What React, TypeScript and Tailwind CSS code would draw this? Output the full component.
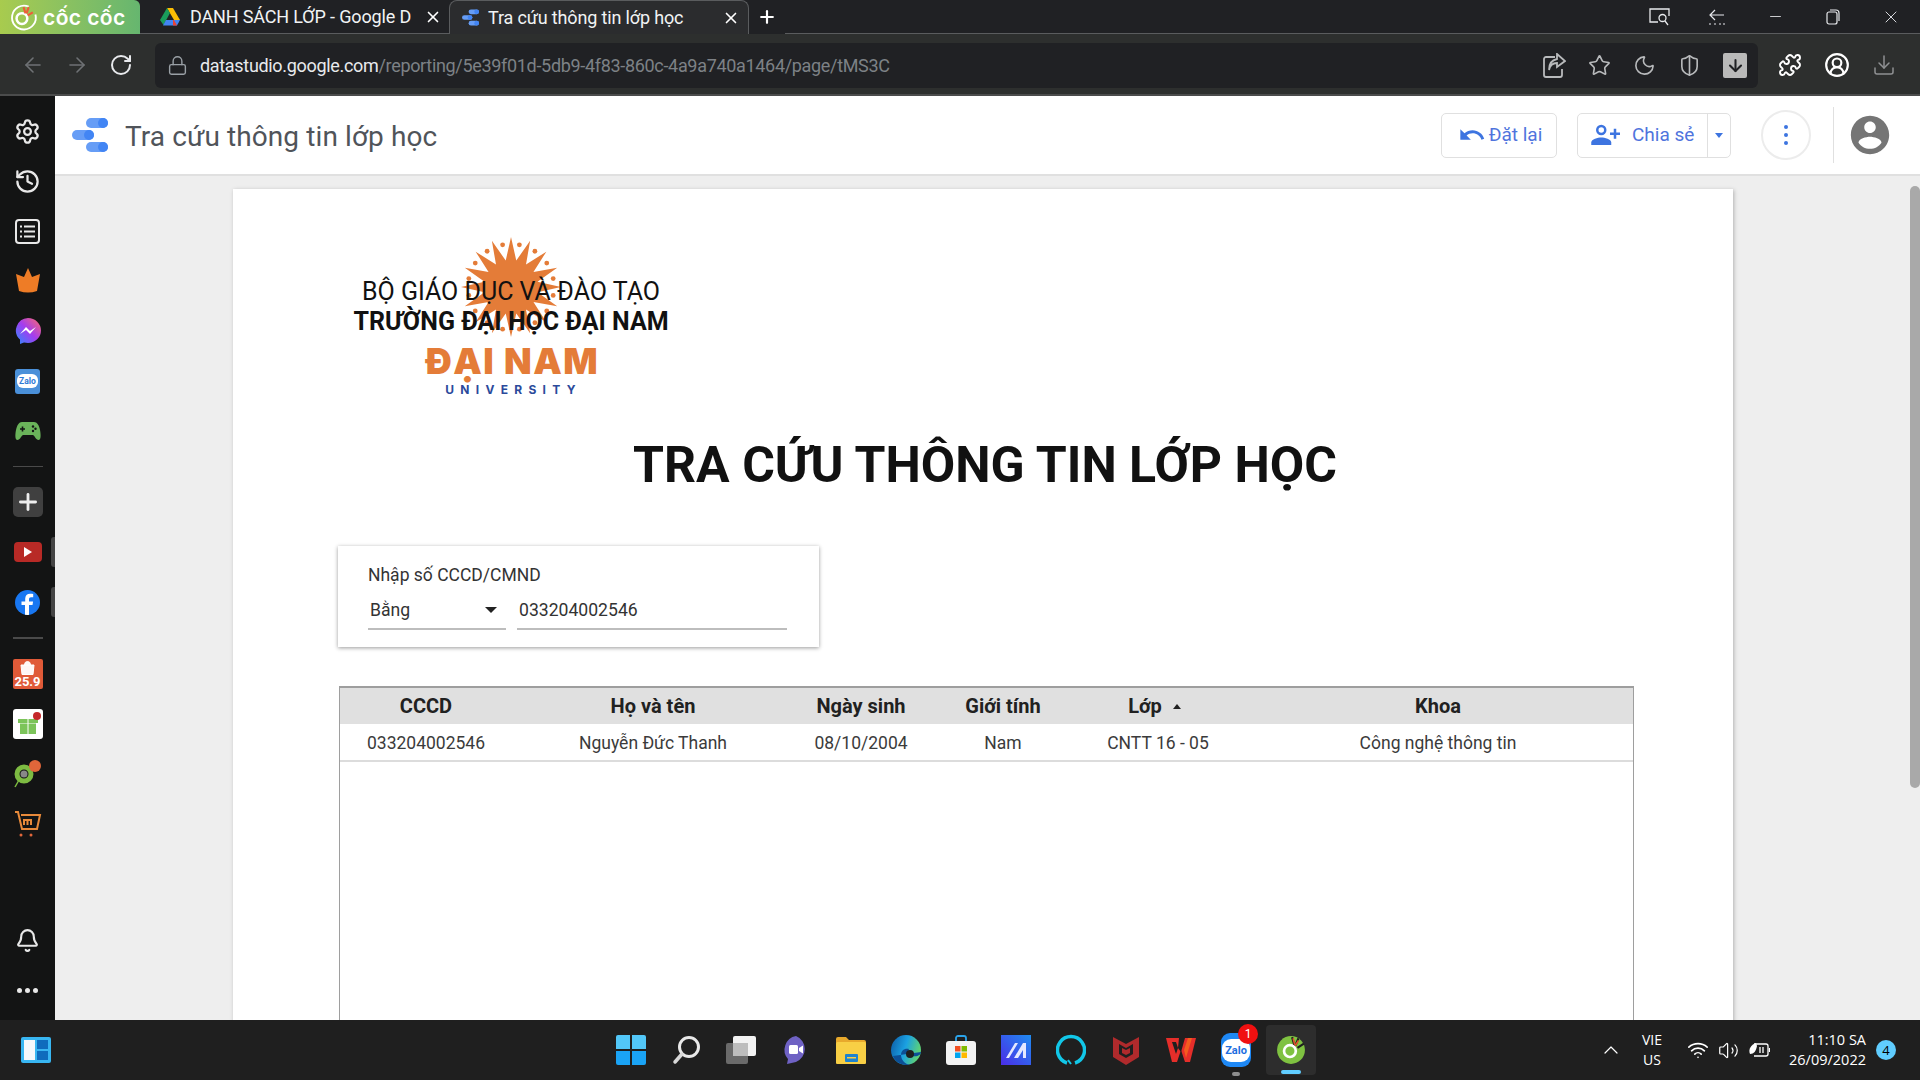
import React from "react";
import {
  Settings, History, Bell, RotateCw, ArrowLeft, ArrowRight, Lock, Star, Moon, ShieldHalf, ArrowDown,
  Puzzle, CircleUserRound, Download, Plus, X, Minus, ChevronUp, Wifi, Volume2,
} from "lucide-react";

const roboto = { fontFamily: "Roboto, 'Noto Sans', sans-serif" };

function GdsLogo({ size = 36 }: { size?: number }) {
  return (
    <svg width={size} height={size} viewBox="0 0 36 36">
      <rect x="14" y="1" width="22" height="10" rx="5" fill="#669df6" />
      <circle cx="31" cy="6" r="5" fill="#4285f4" />
      <rect x="0" y="13" width="22" height="10" rx="5" fill="#669df6" />
      <circle cx="17" cy="18" r="5" fill="#4285f4" />
      <rect x="14" y="25" width="22" height="10" rx="5" fill="#669df6" />
      <circle cx="31" cy="30" r="5" fill="#4285f4" />
    </svg>
  );
}

function DriveLogo() {
  return (
    <svg width="20" height="18" viewBox="0 0 20 18">
      <path d="M7 0h6l7 12h-6z" fill="#fbbc04" />
      <path d="M7 0l3 5-6.500 12L0 12z" fill="#1a9c5b" />
      <path d="M6 12h14l-3 5.500H3z" fill="#4285f4" />
      <path d="M13 12l1 0 3 5.500h-4z" fill="#ea4335" />
    </svg>
  );
}

function CocCocMark({ size = 28 }: { size?: number }) {
  return (
    <svg width={size} height={size} viewBox="0 0 28 28" fill="none">
      <path d="M19 3.500A11.500 11.500 0 1 0 25.500 11" stroke="#fff" strokeWidth="1.800" />
      <circle cx="12.500" cy="15" r="5.200" stroke="#fff" strokeWidth="2.400" />
      <path d="M14 4l2 6M19 4l-2 6M23 9l-5 3" stroke="#f15a3a" strokeWidth="2" />
    </svg>
  );
}

function SunLogo() {
  const spikes = 16;
  const pts: string[] = [];
  for (let i = 0; i < spikes * 2; i++) {
    const r = i % 2 === 0 ? 50 : 27;
    const a = (i * Math.PI) / spikes - Math.PI / 2;
    pts.push(`${50 + r * Math.cos(a)},${50 + r * Math.sin(a)}`);
  }
  const dots = Array.from({ length: spikes }, (_, i) => {
    const a = ((i + 0.5) * 2 * Math.PI) / spikes - Math.PI / 2;
    return [50 + 43 * Math.cos(a), 50 + 43 * Math.sin(a)];
  });
  return (
    <svg width="100" height="100" viewBox="0 0 100 100" className="shrink-0">
      <polygon points={pts.join(" ")} fill="#e47c38" />
      {dots.map(([x, y], i) => (
        <circle key={i} cx={x} cy={y} r="2.400" fill="#e47c38" />
      ))}
    </svg>
  );
}

function Side({ children }: { children: React.ReactNode }) {
  return <div className="h-[50px] flex items-center justify-center text-[#e8e8e8] shrink-0">{children}</div>;
}

function SidebarIcons() {
  return (
    <aside className="w-[55px] bg-[#131414] flex flex-col pt-[10px] pb-[5px] shrink-0 relative">
      <Side><Settings size={27} strokeWidth={2} /></Side>
      <Side><History size={27} strokeWidth={2} /></Side>
      <Side>
        <svg width="25" height="25" viewBox="0 0 25 25" fill="none" stroke="#e8e8e8" strokeWidth="2">
          <rect x="1" y="1" width="23" height="23" rx="3" />
          <path d="M9 7.500h11M9 12.500h11M9 17.500h11M5 7.500h2M5 12.500h2M5 17.500h2" />
        </svg>
      </Side>
      <Side>
        <svg width="26" height="26" viewBox="0 0 26 26"><path d="M13 0l4 9 8-3-3 17q-9 3-18 0L1 6l8 3z" fill="#ee7c26" /></svg>
      </Side>
      <Side>
        <svg width="26" height="26" viewBox="0 0 26 26">
          <defs>
            <linearGradient id="ms" x1="0" y1="1" x2="1" y2="0">
              <stop offset="0" stopColor="#2a8cff" />
              <stop offset="0.500" stopColor="#a33cf0" />
              <stop offset="1" stopColor="#ff6b6b" />
            </linearGradient>
          </defs>
          <path d="M13 0a13 12.500 0 0 1 0 25l-4-.6L5 26v-4.500A13 12.500 0 0 1 13 0z" fill="url(#ms)" />
          <path d="M5 16l6-7 4 4 6-4-6 7-4-4z" fill="#fff" />
        </svg>
      </Side>
      <Side>
        <div className="w-[25px] h-[25px] bg-[#4a90d9] rounded-[3px] flex items-center justify-center">
          <div className="bg-white rounded-[6px] w-[21px] h-[14px] flex items-center justify-center text-[8.500px] font-bold text-[#2f7ad6] leading-none" style={roboto}>Zalo</div>
        </div>
      </Side>
      <Side>
        <svg width="26" height="22" viewBox="0 0 26 22">
          <path d="M7 2h12c3 0 5 3 6 8 1 5 1 10-1.500 10S20 16 18 15H8c-2 1-3 5-5.500 5S0 15 1 10c1-5 3-8 6-8z" fill="#6ab35a" />
          <path d="M5 9h5M7.500 6.500v5" stroke="#131414" strokeWidth="1.600" />
          <circle cx="18" cy="6.500" r="1.200" fill="#131414" />
          <circle cx="18" cy="11" r="1.200" fill="#131414" />
          <circle cx="20.500" cy="8.700" r="1.200" fill="#131414" />
        </svg>
      </Side>
      <div className="h-[21px] flex items-center justify-center shrink-0">
        <div className="w-[30px] h-[1px] bg-[#4a4a4a]" />
      </div>
      <Side>
        <div className="w-[30px] h-[30px] rounded-[5px] bg-[#404040] flex items-center justify-center"><Plus size={26} strokeWidth={2.600} color="#eee" /></div>
      </Side>
      <Side>
        <div className="w-[28px] h-[20px] rounded-[4px] bg-[#b82a26] flex items-center justify-center">
          <svg width="10" height="10" viewBox="0 0 10 10"><path d="M1 0l8 5-8 5z" fill="#fff" /></svg>
        </div>
      </Side>
      <Side>
        <div className="w-[25px] h-[25px] rounded-full bg-[#1877f2] overflow-hidden flex items-end justify-center">
          <svg width="25" height="25" viewBox="0 0 25 25"><path d="M14 25v-10h3.500l.6-3.600H14V9.300c0-1.200.6-2 2-2h2.200V4c-1-.2-2-.3-3-.3-3.200 0-5 1.900-5 5v2.700H6.500V15H10v10z" fill="#fff" /></svg>
        </div>
      </Side>
      <div className="h-[22px] flex items-center justify-center shrink-0">
        <div className="w-[30px] h-[2px] bg-[#4a4a4a]" />
      </div>
      <Side>
        <div className="w-[30px] h-[30px] bg-[#e05a38] rounded-[2px] flex flex-col items-center justify-end text-white leading-none" style={roboto}>
          <svg width="15" height="15" viewBox="0 0 15 15"><path d="M1 5h13l-1 9.500H2zM4.500 5a3 3.500 0 0 1 6 0" fill="#fff" stroke="#fff" fillOpacity="0.950" /></svg>
          <span className="text-[13px] font-bold leading-[14px]">25.9</span>
        </div>
      </Side>
      <Side>
        <div className="w-[30px] h-[30px] bg-white rounded-[3px] flex items-center justify-center relative">
          <svg width="22" height="22" viewBox="0 0 22 22"><path d="M1 6h20v4H1zM3 10.500h16V21H3z" fill="#7cc45a" /><path d="M11 6v15" stroke="#fff" strokeWidth="1" /></svg>
          <div className="absolute top-[3px] right-[2px] w-[8px] h-[8px] bg-[#c5282a] rounded-full" />
        </div>
      </Side>
      <Side>
        <svg width="30" height="28" viewBox="0 0 30 28" fill="none">
          <circle cx="11" cy="14" r="7" stroke="#7dbb42" strokeWidth="5" />
          <circle cx="11" cy="14" r="3.500" fill="#888" />
          <circle cx="22" cy="6" r="6" fill="#e0663a" />
          <path d="M6 20l-4 7" stroke="#7dbb42" strokeWidth="1.500" />
        </svg>
      </Side>
      <Side>
        <svg width="28" height="28" viewBox="0 0 28 28" fill="none" stroke="#e88a3a" strokeWidth="2">
          <path d="M1 2h3l4 17h15l3-14H7" />
          <path d="M10 15v-5h7v5M13.500 10v5" />
          <circle cx="7" cy="25" r="1.500" fill="#e0663a" stroke="none" />
          <circle cx="17" cy="25" r="1.500" fill="#e0663a" stroke="none" />
        </svg>
      </Side>
      <div className="mt-auto" />
      <Side><Bell size={25} strokeWidth={2} /></Side>
      <Side>
        <div className="flex gap-[3px]">
          <div className="w-[5px] h-[5px] rounded-full bg-[#e8e8e8]" />
          <div className="w-[5px] h-[5px] rounded-full bg-[#e8e8e8]" />
          <div className="w-[5px] h-[5px] rounded-full bg-[#e8e8e8]" />
        </div>
      </Side>
      <div className="absolute left-[51px] top-[441px] w-[4px] h-[30px] rounded-l-[3px] bg-[#444]" />
      <div className="absolute left-[51px] top-[491px] w-[4px] h-[30px] rounded-l-[3px] bg-[#444]" />
    </aside>
  );
}

function TabBar() {
  return (
    <div className="h-[34px] bg-[#202124] flex items-stretch shrink-0 text-white relative" style={{ fontFamily: "'Noto Sans', sans-serif" }}>
      <div className="w-[140px] h-[34px] rounded-tr-[6px] flex items-center pl-[9px] gap-[5px] bg-gradient-to-r from-[#a8cb4e] to-[#66b66f] shrink-0">
        <CocCocMark size={29} />
        <span className="text-[21px] font-semibold text-white tracking-[0.4px] leading-none" style={{ fontFamily: "Inter, sans-serif" }}>cốc cốc</span>
      </div>
      <div className="w-[309px] flex items-center pl-[20px] shrink-0 border-b border-[#5a5c5e]">
        <DriveLogo />
        <span className="ml-[10px] text-[18px] w-[224px] whitespace-nowrap text-[#f1f3f4] tracking-[-0.150px]" style={roboto}>DANH SÁCH LỚP - Google D</span>
        <X size={18} strokeWidth={2.200} className="ml-[10px]" />
      </div>
      <div className="w-[300px] flex items-center pl-[12px] shrink-0 rounded-t-[8px] border border-b-0 border-[#5a5c5e] bg-[#2b2c2e]">
        <div className="w-[18px] h-[18px] flex items-center"><GdsLogo size={17} /></div>
        <span className="ml-[8px] text-[18px] w-[234px] whitespace-nowrap text-[#f1f3f4] tracking-[-0.150px]" style={roboto}>Tra cứu thông tin lớp học</span>
        <X size={18} strokeWidth={2.200} />
      </div>
      <div className="w-[36px] flex items-center justify-center shrink-0"><Plus size={20} strokeWidth={2.600} /></div>
      <div className="flex-1 border-b border-[#5a5c5e] flex items-center justify-end text-[#e8eaed]">
        <div className="w-[58px] flex justify-center">
          <svg width="21" height="18" viewBox="0 0 21 18" fill="none" stroke="#e8eaed" strokeWidth="1.300">
            <path d="M9 14H1V1h19v7M13 14" />
            <circle cx="13.500" cy="10" r="3.500" />
            <path d="M16 13l3 4" />
          </svg>
        </div>
        <div className="w-[58px] flex justify-center">
          <svg width="18" height="18" viewBox="0 0 18 18" fill="none" stroke="#e8eaed" strokeWidth="1.200">
            <path d="M7 2L2 7l5 5M2 7h14M1 16h2M6 16h2M11 16h2M15 16h2" />
          </svg>
        </div>
        <div className="w-[58px] flex justify-center"><Minus size={17} strokeWidth={1.200} /></div>
        <div className="w-[58px] flex justify-center">
          <svg width="14" height="16" viewBox="0 0 14 16" fill="none" stroke="#e8eaed" strokeWidth="1.200">
            <rect x="1" y="3" width="10" height="12" rx="2" />
            <path d="M4 1h6a3 3 0 0 1 3 3v8" />
          </svg>
        </div>
        <div className="w-[58px] flex justify-center"><X size={20} strokeWidth={1.100} /></div>
      </div>
    </div>
  );
}

function Toolbar() {
  return (
    <div className="h-[62px] bg-[#2d2f2e] border-b-2 border-[#4b4c4c] pt-[2px] flex items-center shrink-0">
      <div className="w-[155px] flex items-center shrink-0 pl-[21px] text-[#6f7275] gap-[20px]">
        <ArrowLeft size={24} strokeWidth={1.600} />
        <ArrowRight size={24} strokeWidth={1.600} />
        <RotateCw size={24} strokeWidth={2} color="#e8eaed" />
      </div>
      <div className="w-[1603px] h-[45px] rounded-[6px] bg-[#202124] flex items-center pl-[12px] pr-0 shrink-0">
        <Lock size={21} strokeWidth={1.600} color="#9aa0a6" />
        <div className="ml-[12px] text-[18px] whitespace-nowrap tracking-[-0.320px]" style={roboto}>
          <span className="text-[#e8eaed]">datastudio.google.com</span>
          <span className="text-[#7d8186]">/reporting/5e39f01d-5db9-4f83-860c-4a9a740a1464/page/tMS3C</span>
        </div>
        <div className="ml-auto flex items-center text-[#b8babc] gap-[22px] pr-[11px]">
          <svg width="23" height="25" viewBox="0 0 23 25" fill="none" stroke="#b8babc" strokeWidth="1.800">
            <path d="M12 4H3a2 2 0 0 0-2 2v16a2 2 0 0 0 2 2h14a2 2 0 0 0 2-2v-6" />
            <path d="M14 1l8 7-8 6v-4c-4 0-7 2-8 7 0-6 3-10 8-11z" />
          </svg>
          <Star size={23} strokeWidth={1.700} />
          <Moon size={23} strokeWidth={1.700} />
          <ShieldHalf size={23} strokeWidth={1.700} />
          <div className="w-[24px] h-[25px] rounded-[2px] bg-[#b9b9b9] flex items-center justify-center">
            <ArrowDown size={19} strokeWidth={2.600} color="#202124" />
          </div>
        </div>
      </div>
      <div className="flex items-center text-white ml-[20px] gap-[22px]">
        <Puzzle size={24} strokeWidth={1.900} />
        <CircleUserRound size={26} strokeWidth={2} />
        <Download size={24} strokeWidth={1.500} color="#8f9193" />
      </div>
    </div>
  );
}

function Header() {
  return (
    <div className="h-[80px] bg-white border-b-2 border-[#e0e0e0] flex items-center shrink-0" style={roboto}>
      <div className="ml-[17px]"><GdsLogo size={36} /></div>
      <div className="ml-[17px] mt-[3px] text-[28px] text-[#50545a] tracking-[0.1px]">Tra cứu thông tin lớp học</div>
      <div className="ml-auto flex items-center">
        <button className="w-[116px] h-[45px] border border-[#e0e0e0] rounded-[5px] flex items-center justify-center gap-[1px] text-[19px] text-[#4f74dd]">
          <svg width="32" height="28" viewBox="0 0 24 24" fill="#3d74e0"><path d="M12.500 8c-2.650 0-5.050.99-6.900 2.600L2 7v9h9l-3.620-3.620c1.390-1.160 3.160-1.880 5.120-1.880 3.540 0 6.550 2.310 7.600 5.500l2.370-.78C21.080 11.030 17.150 8 12.500 8z" /></svg>
          Đặt lại
        </button>
        <div className="ml-[20px] w-[154px] h-[45px] border border-[#e0e0e0] rounded-[5px] flex items-center text-[19px] text-[#4f74dd]">
          <div className="w-[129px] flex items-center pl-[12px] gap-[12px]">
            <svg width="30" height="30" viewBox="0 0 24 24" fill="#3d74e0">
              <circle cx="9" cy="8" r="3.200" fill="none" stroke="#3d74e0" strokeWidth="2" />
              <path d="M1 20v-2c0-2.660 5.330-4 8-4s8 1.340 8 4v2z" />
              <path d="M19 7v3h-3v2h3v3h2v-3h3v-2h-3V7z" />
            </svg>
            Chia sẻ
          </div>
          <div className="flex-1 h-full border-l border-[#e0e0e0] flex items-center justify-center">
            <div className="w-0 h-0 border-l-[4px] border-r-[4px] border-t-[5px] border-l-transparent border-r-transparent border-t-[#3d74e0]" />
          </div>
        </div>
        <div className="ml-[30px] w-[50px] h-[50px] rounded-full border-2 border-[#ececec] flex flex-col items-center justify-center gap-[3.500px]">
          <div className="w-[4.500px] h-[4.500px] rounded-full bg-[#3d74e0]" />
          <div className="w-[4.500px] h-[4.500px] rounded-full bg-[#3d74e0]" />
          <div className="w-[4.500px] h-[4.500px] rounded-full bg-[#3d74e0]" />
        </div>
        <div className="ml-[22px] w-[1px] h-[56px] bg-[#e0e0e0]" />
        <div className="ml-[13px] mr-[27px] w-[46px] h-[46px] flex items-center justify-center">
          <svg width="48" height="48" viewBox="0 0 24 24" fill="#757575"><path d="M12 2C6.480 2 2 6.480 2 12s4.480 10 10 10 10-4.480 10-10S17.520 2 12 2zm0 3c1.660 0 3 1.340 3 3s-1.340 3-3 3-3-1.340-3-3 1.340-3 3-3zm0 14.200c-2.500 0-4.710-1.280-6-3.220.03-1.990 4-3.080 6-3.080 1.990 0 5.970 1.090 6 3.080-1.290 1.940-3.500 3.220-6 3.220z" /></svg>
        </div>
      </div>
    </div>
  );
}

const cols = ["w-[172px]", "w-[282px]", "w-[134px]", "w-[150px]", "w-[160px]", "flex-1 pl-[5px]"];

function TableView() {
  const head = ["CCCD", "Họ và tên", "Ngày sinh", "Giới tính", "Lớp", "Khoa"];
  const row = ["033204002546", "Nguyễn Đức Thanh", "08/10/2004", "Nam", "CNTT 16 - 05", "Công nghệ thông tin"];
  return (
    <div className="mt-[39px] ml-[106px] w-[1295px] h-[700px] shrink-0 border border-[#9e9e9e] border-t-2">
      <div className="h-[36px] bg-[#e0e0e0] flex items-center text-[20px] font-bold text-[#212121]">
        {head.map((h, i) => (
          <div key={h} className={`${cols[i]} text-center ${h === "Lớp" ? "pr-[7px]" : ""}`}>
            {h}
            {h === "Lớp" && <span className="inline-block align-middle ml-[11px] mb-[3px] w-0 h-0 border-l-[4px] border-r-[4px] border-b-[5px] border-l-transparent border-r-transparent border-b-[#212121]" />}
          </div>
        ))}
      </div>
      <div className="h-[38px] pt-[2px] border-b-2 border-[#dcdcdc] flex items-center text-[17.500px] text-[#3b3b3b]">
        {row.map((c, i) => (
          <div key={c} className={`${cols[i]} text-center`}>{c}</div>
        ))}
      </div>
    </div>
  );
}

function ReportCard() {
  return (
    <div className="ml-[178px] mt-[13px] w-[1500px] h-[1300px] shrink-0 bg-white flex flex-col shadow-[1px_1px_4px_rgba(0,0,0,0.25)]" style={roboto}>
      <div className="h-[156px] relative w-[420px] ml-[68px] mt-[48px] shrink-0 flex flex-col items-center text-black">
        <SunLogo />
        <div className="absolute top-[40px] w-full text-center text-[25px] leading-[30px] text-[#111]">
          <div>BỘ GIÁO DỤC VÀ ĐÀO TẠO</div>
          <div className="font-bold">TRƯỜNG ĐẠI HỌC ĐẠI NAM</div>
        </div>
        <div className="mt-[5px] ml-[3px] text-[36px] leading-[38px] font-black text-[#e47c38] tracking-[1.500px] shrink-0" style={{ fontFamily: "Inter, sans-serif" }}>ĐẠI NAM</div>
        <div className="mt-[3px] ml-[5px] text-[12px] leading-[14px] font-bold text-[#2b4a9b] tracking-[6.300px] shrink-0" style={{ fontFamily: "Inter, sans-serif" }}>UNIVERSITY</div>
      </div>
      <h1 className="mt-[42px] text-center text-[50px] leading-[60px] font-bold text-[#111] ml-[4px]">TRA CỨU THÔNG TIN LỚP HỌC</h1>
      <div className="mt-[51px] ml-[105px] w-[481px] h-[101px] shrink-0 bg-white shadow-[0_1px_4px_rgba(0,0,0,0.4)] pl-[30px] pt-[16px]">
        <div className="text-[17.500px] leading-[26px] text-[#333]">Nhập số CCCD/CMND</div>
        <div className="flex mt-[4px] text-[17.600px] text-[#333]">
          <div className="w-[138px] h-[38px] border-b-2 border-[#bdbdbd] flex items-center pl-[2px] pr-[9px] justify-between">
            <span>Bằng</span>
            <div className="w-0 h-0 border-l-[6px] border-r-[6px] border-t-[6px] border-l-transparent border-r-transparent border-t-[#222]" />
          </div>
          <div className="ml-[11px] w-[270px] h-[38px] border-b-2 border-[#bdbdbd] flex items-center pl-[2px]">033204002546</div>
        </div>
      </div>
      <TableView />
    </div>
  );
}

function TaskIcon({ children, active }: { children: React.ReactNode; active?: boolean }) {
  return (
    <div className={`w-[50px] h-[50px] rounded-[4px] flex items-center justify-center relative ${active ? "bg-[#2d2d2d]" : ""}`}>{children}</div>
  );
}

function Taskbar() {
  return (
    <div className="h-[60px] bg-[#1f1f1f] flex items-center shrink-0 relative z-10 text-white" style={{ fontFamily: "'Open Sans', sans-serif" }}>
      <div className="w-[606px] pl-[21px] shrink-0">
        <svg width="30" height="26" viewBox="0 0 30 26">
          <rect width="30" height="26" rx="2" fill="#38b6f2" />
          <rect x="3" y="3" width="11" height="20" fill="#f4f8fb" />
          <rect x="16" y="3" width="11" height="9" fill="#0f6cbd" />
          <rect x="16" y="14" width="11" height="9" fill="#0f6cbd" />
        </svg>
      </div>
      <div className="flex items-center gap-[5px]">
        <TaskIcon>
          <div className="grid grid-cols-2 gap-[2px] w-[30px] h-[30px]">
            <div className="bg-[#52c7f8] rounded-tl-[2px]" /><div className="bg-[#52c7f8] rounded-tr-[2px]" />
            <div className="bg-[#1aa3f5] rounded-bl-[2px]" /><div className="bg-[#1aa3f5] rounded-br-[2px]" />
          </div>
        </TaskIcon>
        <TaskIcon>
          <svg width="30" height="30" viewBox="0 0 30 30" fill="none"><circle cx="18" cy="12" r="9.500" stroke="#e8e8e8" strokeWidth="3" fill="#1f1f1f" /><path d="M11 19l-7 8" stroke="#d8d8d8" strokeWidth="3.500" strokeLinecap="round" /></svg>
        </TaskIcon>
        <TaskIcon>
          <svg width="30" height="30" viewBox="0 0 30 30"><rect x="7" y="1" width="23" height="20" rx="2" fill="#f2f2f2" /><rect x="0" y="8" width="22" height="21" rx="2" fill="#6a6a6a" /><rect x="7" y="8" width="15" height="13" fill="#bdbdbd" /></svg>
        </TaskIcon>
        <TaskIcon>
          <svg width="30" height="30" viewBox="0 0 30 30"><path d="M15 1a14 14 0 0 1 0 26l-9 2 1-5A14 14 0 0 1 15 1z" fill="#6f62c4" /><rect x="8" y="10" width="9" height="9" rx="1.500" fill="#fff" /><path d="M18 13l4-2.500v8L18 16z" fill="#fff" /></svg>
        </TaskIcon>
        <TaskIcon>
          <svg width="30" height="28" viewBox="0 0 30 28"><path d="M0 3a2 2 0 0 1 2-2h8l3 3h15a2 2 0 0 1 2 2v20a2 2 0 0 1-2 2H2a2 2 0 0 1-2-2z" fill="#e8a92c" /><rect y="6" width="30" height="22" rx="1.500" fill="#f8cf45" /><rect x="9" y="18" width="13" height="8" rx="1" fill="#1d82cf" /><rect x="11" y="21" width="9" height="1.500" fill="#f8cf45" /></svg>
        </TaskIcon>
        <TaskIcon>
          <svg width="30" height="30" viewBox="0 0 30 30" fill="none">
            <defs>
              <linearGradient id="ed" x1="0" y1="0" x2="1" y2="0.300"><stop offset="0" stopColor="#0c59a4" /><stop offset="0.550" stopColor="#1ba1e2" /><stop offset="1" stopColor="#5bd079" /></linearGradient>
            </defs>
            <circle cx="15" cy="15" r="15" fill="url(#ed)" />
            <path d="M30 17c0 3-4 5-8 4-4-1-6-4-4-7-5-1-8 2-8 6 0 5 4 9 9 10-8 1-15-3-17-9" fill="#0c4f96" />
            <circle cx="19" cy="19" r="4" fill="#1f1f1f" />
          </svg>
        </TaskIcon>
        <TaskIcon>
          <svg width="30" height="30" viewBox="0 0 30 30"><path d="M10 7V3a2 2 0 0 1 2-2h6a2 2 0 0 1 2 2v4" stroke="#2aa3ea" strokeWidth="1.800" fill="none" /><rect y="6" width="30" height="24" rx="3" fill="#f3f3f3" /><rect x="9" y="11" width="5.500" height="5.500" fill="#f25022" /><rect x="15.500" y="11" width="5.500" height="5.500" fill="#7fba00" /><rect x="9" y="17.500" width="5.500" height="5.500" fill="#00a4ef" /><rect x="15.500" y="17.500" width="5.500" height="5.500" fill="#ffb900" /></svg>
        </TaskIcon>
        <TaskIcon>
          <svg width="30" height="30" viewBox="0 0 30 30"><defs><linearGradient id="mx" x1="0" y1="1" x2="1" y2="0"><stop offset="0" stopColor="#4b2ce8" /><stop offset="1" stopColor="#1f8cf0" /></linearGradient></defs><rect width="30" height="30" fill="url(#mx)" /><path d="M5 23L14 8h3L8 23zM13 23l9-15h3v15h-3v-8l-5 8z" fill="#e4e8ff" /></svg>
        </TaskIcon>
        <TaskIcon>
          <svg width="30" height="32" viewBox="0 0 30 32" fill="none"><path d="M11 29A13.500 13.500 0 1 1 19 29" stroke="#12c7e8" strokeWidth="3.500" /><path d="M12 26l3 4" stroke="#12c7e8" strokeWidth="2" /></svg>
        </TaskIcon>
        <TaskIcon>
          <svg width="26" height="30" viewBox="0 0 26 30"><path d="M0 2l13 7 13-7v20L13 30 0 22z" fill="#b02a2c" /><path d="M6 9l7 4 7-4v10l-7 4-7-4z" fill="#1f1f1f" /><path d="M9 13l4 2 4-2v5l-4 2-4-2z" fill="#b02a2c" /></svg>
        </TaskIcon>
        <TaskIcon>
          <svg width="30" height="28" viewBox="0 0 30 28"><path d="M0 2h30l-6 24h-5l-4-12-4 12H6z" fill="#e62e2a" /><path d="M13 2h6l-4 14-3-4zM6 6l4 12 2-6-2-6z" fill="#1f1f1f" /><path d="M18 14l4-12h4l-6 20z" fill="#f45c1f" /></svg>
        </TaskIcon>
        <TaskIcon>
          <div className="w-[30px] h-[34px] rounded-[9px] bg-[#1e88f5] flex items-center justify-center">
            <div className="w-[28px] h-[23px] rounded-[9px] bg-white flex items-center justify-center text-[11px] font-bold text-[#1e6fe0] leading-none" style={roboto}>Zalo</div>
          </div>
          <div className="absolute top-[-1px] right-[3px] w-[20px] h-[20px] rounded-full bg-[#f01010] flex items-center justify-center text-[12px] text-white leading-none" style={roboto}>1</div>
          <div className="absolute bottom-[-1px] left-[21px] w-[8px] h-[4px] rounded-full bg-[#8e8e8e]" />
        </TaskIcon>
        <TaskIcon active>
          <svg width="30" height="30" viewBox="0 0 28 28" fill="none">
            <circle cx="14" cy="14" r="13" fill="#7fc241" />
            <circle cx="13" cy="15" r="5.500" stroke="#fff" strokeWidth="2.500" />
            <path d="M15 2l2 7M21 3l-3 7M26 8l-6 4" stroke="#1f1f1f" strokeWidth="2" />
            <path d="M16 3l1.500 6M21 5l-3 5" stroke="#e2552f" strokeWidth="1.500" />
          </svg>
          <div className="absolute bottom-[1px] left-[15px] w-[20px] h-[4px] rounded-full bg-[#60cdff]" />
        </TaskIcon>
      </div>
      <div className="flex items-center ml-auto">
        <ChevronUp size={24} strokeWidth={1.200} />
        <div className="ml-[14px] w-[30px] text-center text-[14px] leading-[20px]">VIE<br />US</div>
        <div className="ml-[20px] flex items-center gap-[9px]">
          <Wifi size={22} strokeWidth={1.800} />
          <Volume2 size={21} strokeWidth={1.400} />
          <svg width="22" height="16" viewBox="0 0 22 16" fill="none" stroke="#fff" strokeWidth="1.300">
            <path d="M6 2h12a2 2 0 0 1 2 2v8a2 2 0 0 1-2 2H6" />
            <path d="M21.500 6v4" />
            <path d="M8 1C3 3 0 7 2 12c4 0 6-3 7-8z" fill="#fff" stroke="none" />
            <path d="M12 5v6M15 5v6" />
          </svg>
        </div>
        <div className="ml-[16px] text-right text-[14.500px] leading-[20px] w-[80px]">11:10 SA<br />26/09/2022</div>
        <div className="ml-[10px] mr-[24px] w-[20px] h-[20px] rounded-full bg-[#60cdff] text-black text-[13px] flex items-center justify-center leading-none">4</div>
      </div>
    </div>
  );
}

export default function App() {
  return (
    <div className="w-[1920px] h-[1080px] overflow-hidden flex flex-col bg-[#131414]">
      <TabBar />
      <Toolbar />
      <div className="flex flex-1 min-h-0">
        <SidebarIcons />
        <div className="flex-1 flex flex-col min-w-0">
          <Header />
          <div className="flex-1 bg-[#eeeeee] flex flex-col min-h-0 overflow-hidden relative">
            <ReportCard />
            <div className="absolute right-0 top-[10px] w-[10px] h-[602px] rounded-[5px] bg-[#a9a9a9]" />
          </div>
        </div>
      </div>
      <Taskbar />
    </div>
  );
}
